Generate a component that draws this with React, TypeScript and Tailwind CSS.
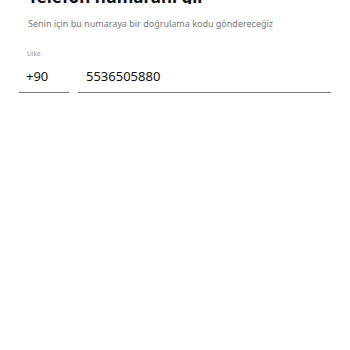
export default function App() {
  return (
    <div className="w-[350px] h-[350px] bg-white overflow-hidden" style={{ fontFamily: '"Noto Sans", sans-serif' }}>
      <div className="pl-[28px]">
        <div className="mt-[-13px] h-[17px] overflow-hidden">
          <h1 className="text-[17px] leading-[20px] font-bold text-[#111]">Telefon numaranı gir</h1>
        </div>
        <p className="mt-[14px] text-[9px] leading-[12px] text-[#777]">Senin için bu numaraya bir doğrulama kodu göndereceğiz</p>
      </div>
      <div className="mt-[20px] flex gap-[9px] px-[19px]">
        <div className="w-[50px] flex flex-col">
          <div className="pl-[8px] text-[6.5px] leading-[8px] text-[#999]">Ülke</div>
          <div className="mt-[9px] pl-[7px] h-[25px] text-[13px] leading-[18px] text-[#111]">+90</div>
          <div className="h-[1px] bg-[#777]" />
        </div>
        <div className="flex-1 flex flex-col">
          <div className="h-[8px]" />
          <div className="mt-[9px] pl-[8px] h-[25px] text-[13px] leading-[18px] text-[#111]">5536505880</div>
          <div className="h-[1px] bg-[#777]" />
        </div>
      </div>
    </div>
  );
}
